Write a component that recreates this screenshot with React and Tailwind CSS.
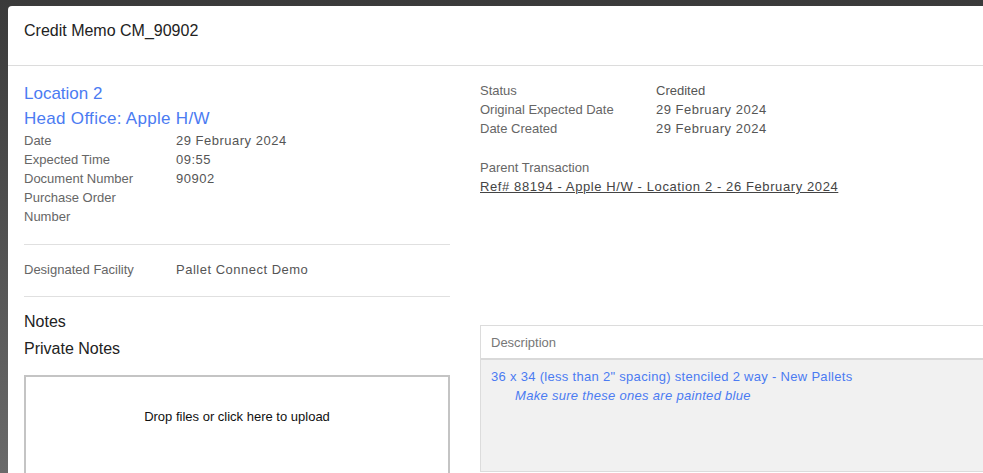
export default function App() {
  return (
    <div className="w-[983px] h-[473px] overflow-hidden bg-gradient-to-b from-[#3a3a3a] to-[#6a6a6a] pl-2 pt-1.5 font-['Liberation_Sans',Arial,sans-serif]">
      <div className="bg-white rounded-tl-[4px] w-[1010px] h-[600px]">
        <div className="h-[60px] px-4 pt-[15px] border-b border-[#dcdcdc]">
          <h1 className="text-[16px] leading-[20px] text-[#222]">Credit Memo CM_90902</h1>
        </div>
        <div className="flex px-4 gap-[30px]">
          <div className="w-[426px] pt-[15px]">
            <div className="text-[17px] leading-[25px] text-[#4b7bf2]">
              <div>Location 2</div>
              <div className="tracking-[0.3px]">Head Office: Apple H/W</div>
            </div>
            <div className="text-[13px] leading-[19px]">
              <Row label="Date" value="29 February 2024" />
              <Row label="Expected Time" value="09:55" />
              <Row label="Document Number" value="90902" />
              <Row label="Purchase Order Number" value="" />
            </div>
            <div className="mt-[18px] border-t border-[#e0e0e0] pt-[15px] pb-[17px] text-[13px] leading-[19px]">
              <Row label="Designated Facility" value="Pallet Connect Demo" />
            </div>
            <div className="border-t border-[#e0e0e0] pt-[11px] text-[16px] leading-[27px] text-[#222]">
              <div>Notes</div>
              <div>Private Notes</div>
            </div>
            <div className="mt-[13px] h-[120px] border-2 border-[#c4c4c4] pt-[30px] text-center text-[13px] text-[#111]">
              Drop files or click here to upload
            </div>
          </div>
          <div className="flex-1 pt-[15px] text-[13px] leading-[19px]">
            <div className="flex">
              <div className="w-[176px] text-[#666]">Status</div>
              <div className="text-[#555]">Credited</div>
            </div>
            <div className="flex">
              <div className="w-[176px] text-[#666]">Original Expected Date</div>
              <div className="text-[#555] tracking-[0.5px]">29 February 2024</div>
            </div>
            <div className="flex">
              <div className="w-[176px] text-[#666]">Date Created</div>
              <div className="text-[#555] tracking-[0.5px]">29 February 2024</div>
            </div>
            <div className="mt-[20px] text-[#666]">Parent Transaction</div>
            <a href="#" className="text-[#444] underline tracking-[0.6px]">
              Ref# 88194 - Apple H/W - Location 2 - 26 February 2024
            </a>
            <div className="mt-[129px] border-t border-l border-[#dcdcdc]">
              <div className="h-[34px] flex items-center px-[10px] text-[#777] border-b-2 border-[#d9d9d9]">
                Description
              </div>
              <div className="h-[112px] bg-[#f1f1f1] border-b border-[#dcdcdc] px-[10px] pt-[7px] text-[#4b7bf2]">
                <div className="tracking-[0.3px]">36 x 34 (less than 2" spacing) stenciled 2 way - New Pallets</div>
                <div className="pl-[24px] italic tracking-[0.3px]">Make sure these ones are painted blue</div>
              </div>
            </div>
          </div>
        </div>
      </div>
    </div>
  );
}

function Row({ label, value }) {
  return (
    <div className="flex">
      <div className="w-[152px] pr-8 text-[#666]">{label}</div>
      <div className="text-[#555] tracking-[0.5px]">{value}</div>
    </div>
  );
}
